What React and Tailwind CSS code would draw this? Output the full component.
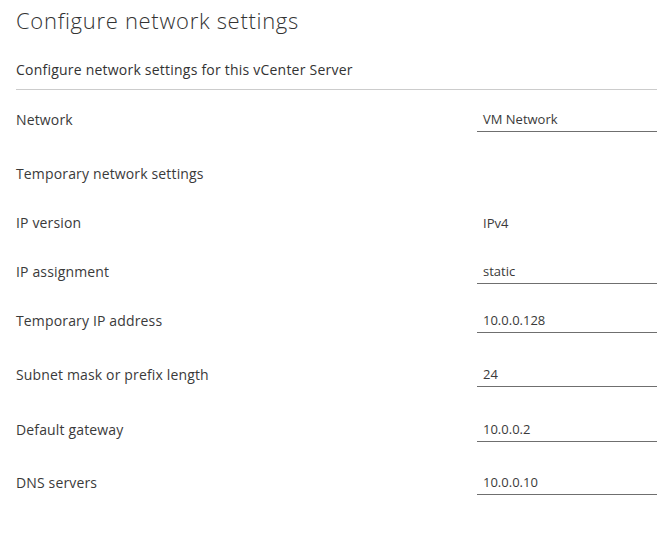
import React from 'react';

const rows = [
  { label: 'Network', value: 'VM Network', input: true, mt: 'mt-[18px]' },
  { label: 'Temporary network settings', mt: 'mt-[30px]' },
  { label: 'IP version', value: 'IPv4', mt: 'mt-[25px]' },
  { label: 'IP assignment', value: 'static', input: true, mt: 'mt-[25px]' },
  { label: 'Temporary IP address', value: '10.0.0.128', input: true, mt: 'mt-[25px]' },
  { label: 'Subnet mask or prefix length', value: '24', input: true, mt: 'mt-[30px]' },
  { label: 'Default gateway', value: '10.0.0.2', input: true, mt: 'mt-[31px]' },
  { label: 'DNS servers', value: '10.0.0.10', input: true, mt: 'mt-[29px]' },
];

const Row = ({ label, value, input, mt }) => (
  <div className={`flex h-[24px] items-center ${mt}`}>
    <div className="w-[461px] pb-[1px] text-[14px] tracking-[0.15px] text-[#3a3a3a]">{label}</div>
    {value && (
      <div
        className={`flex h-[24px] flex-1 items-center pl-[6px] pt-[1px] text-[13px] text-[#3a3a3a] ${
          input ? 'border-b border-[#6f6f6f]' : ''
        }`}
      >
        {value}
      </div>
    )}
  </div>
);

const App = () => {
  return (
    <div
      className="h-[537px] w-[657px] overflow-hidden bg-white pl-[16px]"
      style={{ fontFamily: '"Open Sans", "Liberation Sans", sans-serif' }}
    >
      <h1 className="pt-[5px] text-[22px] font-light leading-[30px] tracking-[0.7px] text-[#333]">
        Configure network settings
      </h1>
      <div className="mt-[26px] border-b border-[#cccccc] pb-[10px] text-[14px] leading-[18px] tracking-[0.22px] text-[#333]">
        Configure network settings for this vCenter Server
      </div>
      {rows.map((r) => (
        <Row key={r.label} {...r} />
      ))}
    </div>
  );
};

export default App;
